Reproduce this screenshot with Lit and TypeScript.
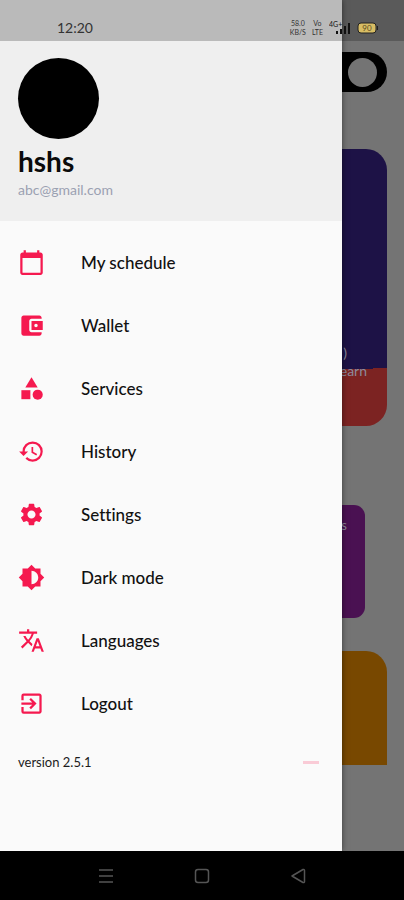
import { LitElement, html, css, svg } from "lit";
import { customElement } from "lit/decorators.js";

const icons = {
  calendar: svg`<path d="M20 3h-1V1h-2v2H7V1H5v2H4c-1.100 0-2 .9-2 2v16c0 1.100.9 2 2 2h16c1.100 0 2-.9 2-2V5c0-1.100-.9-2-2-2zm0 18H4V8h16v13z"/>`,
  wallet: svg`<path d="M21 18v1c0 1.100-.9 2-2 2H5c-1.110 0-2-.9-2-2V5c0-1.100.890-2 2-2h14c1.100 0 2 .9 2 2v1h-9c-1.110 0-2 .9-2 2v8c0 1.100.890 2 2 2h9zm-9-2h10V8H12v8zm4-2.500c-.830 0-1.500-.670-1.500-1.500s.670-1.500 1.500-1.500 1.500.670 1.500 1.500-.670 1.500-1.500 1.500z"/>`,
  services: svg`<path d="M12 2 6.500 11h11z"/><circle cx="17.500" cy="17.500" r="4.500"/><path d="M3 13.500h8v8H3z"/>`,
  history: svg`<path d="M13 3a9 9 0 0 0-9 9H1l3.890 3.890.070.140L9 12H6c0-3.870 3.130-7 7-7s7 3.130 7 7-3.130 7-7 7c-1.930 0-3.680-.790-4.940-2.060l-1.420 1.420A8.954 8.954 0 0 0 13 21a9 9 0 0 0 0-18zm-1 5v5l4.280 2.540.720-1.210-3.500-2.080V8H12z"/>`,
  settings: svg`<path d="M19.140 12.940c.040-.3.060-.610.060-.940 0-.320-.020-.640-.070-.940l2.030-1.580c.180-.140.230-.410.120-.610l-1.920-3.320c-.120-.220-.370-.290-.590-.220l-2.390.960c-.5-.380-1.030-.7-1.620-.940l-.360-2.540c-.040-.240-.240-.410-.480-.410h-3.840c-.240 0-.430.170-.470.410l-.360 2.540c-.590.240-1.130.570-1.620.940l-2.390-.960c-.220-.080-.470 0-.590.220L2.740 8.870c-.120.210-.080.470.120.610l2.030 1.580c-.050.3-.090.630-.090.940s.020.640.070.940l-2.030 1.580c-.180.140-.230.410-.120.610l1.920 3.320c.120.220.370.290.590.220l2.390-.960c.5.380 1.030.7 1.620.940l.360 2.540c.050.240.240.410.480.410h3.840c.240 0 .440-.170.470-.410l.360-2.540c.590-.240 1.130-.560 1.620-.940l2.390.960c.220.080.470 0 .590-.220l1.920-3.320c.120-.220.070-.470-.120-.610l-2.010-1.580zM12 15.600c-1.980 0-3.600-1.620-3.600-3.600s1.620-3.600 3.600-3.600 3.600 1.620 3.600 3.600-1.620 3.600-3.600 3.600z"/>`,
  dark: svg`<path d="M20 15.310 23.310 12 20 8.690V4h-4.690L12 .690 8.690 4H4v4.690L.690 12 4 15.310V20h4.690L12 23.310 15.310 20H20v-4.690zM12 18V6c3.310 0 6 2.690 6 6s-2.690 6-6 6z"/>`,
  translate: svg`<path d="m12.870 15.070-2.540-2.510.030-.030A17.520 17.520 0 0 0 14.070 6H17V4h-7V2H8v2H1v1.990h11.170C11.500 7.920 10.440 9.750 9 11.350 8.070 10.320 7.300 9.190 6.690 8h-2c.730 1.630 1.730 3.170 2.980 4.560l-5.090 5.020L4 19l5-5 3.110 3.110.760-2.040zM18.500 10h-2L12 22h2l1.120-3h4.750L21 22h2l-4.500-12zm-2.620 7 1.620-4.330L19.120 17h-3.240z"/>`,
  logout: svg`<path d="M10.090 15.590 11.500 17l5-5-5-5-1.410 1.410L12.670 11H3v2h9.670l-2.580 2.590zM19 3H5a2 2 0 0 0-2 2v4h2V5h14v14H5v-4H3v4a2 2 0 0 0 2 2h14c1.100 0 2-.9 2-2V5c0-1.100-.9-2-2-2z"/>`,
};

const items = [
  { label: "My schedule", icon: icons.calendar },
  { label: "Wallet", icon: icons.wallet },
  { label: "Services", icon: icons.services },
  { label: "History", icon: icons.history },
  { label: "Settings", icon: icons.settings },
  { label: "Dark mode", icon: icons.dark },
  { label: "Languages", icon: icons.translate },
  { label: "Logout", icon: icons.logout },
];

@customElement("status-bar")
class StatusBar extends LitElement {
  static styles = css`
    :host {
      display: flex;
      align-items: center;
      justify-content: space-between;
      box-sizing: border-box;
      height: 41px;
      padding: 14px 25px 0 57px;
      background: rgba(0, 0, 0, 0.22);
      color: #333;
    }
    .time { font-size: 14px; line-height: 16px; }
    .right { display: flex; align-items: center; gap: 6px; }
    .stack {
      display: flex;
      flex-direction: column;
      font-size: 7px;
      line-height: 9px;
      text-align: center;
    }
    .signal { width: 22px; height: 14px; fill: #111; }
    .tiny { font-size: 7px; }
    .battery { width: 22px; height: 12px; }
    .level { font-size: 8px; fill: #5b4a20; }
  `;
  render() {
    return html`
      <span class="time">12:20</span>
      <div class="right">
        <span class="stack"><span>58.0</span><span>KB/S</span></span>
        <span class="stack"><span>Vo</span><span>LTE</span></span>
        <svg class="signal" viewBox="0 0 22 14" aria-hidden="true">
          <text class="tiny" x="0" y="6">4G+</text>
          <path d="M7 10h2v3H7zM11 8h2v5h-2zM15 5h2v8h-2zM19 2h2v11h-2z" />
        </svg>
        <svg class="battery" viewBox="0 0 22 12" aria-hidden="true">
          <rect x="1" y="1" width="18" height="10" rx="3" fill="#d8bd64" stroke="#222" />
          <path d="M20 4h1v4h-1z" fill="#222" />
          <text class="level" x="10" y="9" text-anchor="middle">90</text>
        </svg>
      </div>
    `;
  }
}

@customElement("home-page")
class HomePage extends LitElement {
  static styles = css`
    :host {
      display: flex;
      flex-direction: column;
      align-items: stretch;
      padding: 52px 17px 0;
      background: #747474;
      color: #8d8a9c;
    }
    .toggle {
      appearance: none;
      display: flex;
      justify-content: flex-end;
      align-items: center;
      align-self: flex-end;
      box-sizing: border-box;
      width: 80px;
      height: 40px;
      margin: 0;
      padding: 0 10px;
      border-radius: 20px;
      background: #000;
    }
    .toggle::before {
      content: "";
      width: 29px;
      height: 29px;
      border-radius: 50%;
      background: #747474;
    }
    .hero {
      display: flex;
      flex-direction: column;
      align-items: flex-end;
      box-sizing: border-box;
      height: 277px;
      margin-top: 57px;
      padding: 195px 20px 0;
      border-radius: 21px;
      background: linear-gradient(178deg, #1d1246 80%, #7c2322 80%);
      font-size: 14px;
      line-height: 18px;
    }
    .mark { padding-right: 20px; }
    .tile {
      box-sizing: border-box;
      height: 113px;
      margin: 79px 22px 0 0;
      padding: 11px 18px;
      border-radius: 11px;
      background: #4a1152;
      font-size: 13px;
      line-height: 18px;
      text-align: right;
    }
    .offer {
      height: 114px;
      margin-top: 33px;
      border-radius: 21px 21px 0 0;
      background: #784800;
    }
  `;
  render() {
    return html`
      <input class="toggle" type="checkbox" role="switch" aria-label="Availability" checked />
      <section class="hero"><span class="mark">)</span><span>earn</span></section>
      <section class="tile">s</section>
      <section class="offer"></section>
    `;
  }
}

@customElement("side-drawer")
class SideDrawer extends LitElement {
  static styles = css`
    :host {
      display: block;
      background: #fafafa;
      box-shadow: 0 0 6px rgba(0, 0, 0, 0.5);
    }
    .profile {
      box-sizing: border-box;
      height: 221px;
      padding: 58px 18px 0;
      background: #efefef;
    }
    .avatar { width: 81px; height: 81px; border-radius: 50%; background: #000; }
    .name {
      margin: 5px 0 0;
      font-size: 28px;
      line-height: 34px;
      font-weight: 700;
      color: #0a0a0a;
    }
    .mail { margin: 3px 0 0; font-size: 14px; line-height: 18px; color: #9ba1b2; }
    .menu { margin: 0; padding: 10px 0 0; list-style: none; }
    .item {
      display: flex;
      align-items: center;
      gap: 36px;
      width: 100%;
      height: 63px;
      padding: 0 18px;
      border: 0;
      background: none;
      font: inherit;
      font-size: 17px;
      line-height: 24px;
      font-weight: 500;
      font-variant-ligatures: none;
      color: #111;
      text-align: left;
      cursor: pointer;
    }
    .icon { width: 27px; height: 27px; fill: #f5194f; }
    .foot {
      display: flex;
      align-items: center;
      justify-content: space-between;
      padding: 17px 23px 0 18px;
      font-size: 13px;
      line-height: 20px;
      color: #1c1c1c;
    }
    .dash { width: 16px; height: 3px; background: #f9cbd6; }
  `;
  render() {
    return html`
      <header class="profile">
        <div class="avatar"></div>
        <h1 class="name">hshs</h1>
        <p class="mail">abc@gmail.com</p>
      </header>
      <ul class="menu">
        ${items.map(
          (item) => html`<li>
            <button class="item" type="button">
              <svg class="icon" viewBox="0 0 24 24" aria-hidden="true">${item.icon}</svg>
              <span>${item.label}</span>
            </button>
          </li>`
        )}
      </ul>
      <div class="foot"><span>version 2.5.1</span><span class="dash"></span></div>
    `;
  }
}

@customElement("app-root")
class AppRoot extends LitElement {
  static styles = css`
    :host {
      display: flex;
      flex-direction: column;
      min-height: 100vh;
      font-family: Lato, "Open Sans", sans-serif;
    }
    .stage {
      position: relative;
      display: grid;
      flex: 1;
      grid-template-columns: 1fr 62px;
      overflow: hidden;
    }
    .page { grid-area: 1 / 1 / 2 / 3; }
    .drawer { grid-area: 1 / 1 / 2 / 2; z-index: 1; }
    .status { position: absolute; top: 0; left: 0; right: 0; z-index: 2; }
    .nav {
      display: flex;
      align-items: center;
      justify-content: center;
      gap: 80px;
      height: 49px;
      background: #000;
    }
    .key { display: flex; padding: 0; border: 0; background: none; cursor: pointer; }
    .glyph { width: 16px; height: 16px; fill: none; stroke: #555; stroke-width: 1.5; }
  `;
  render() {
    return html`
      <div class="stage">
        <home-page class="page"></home-page>
        <side-drawer class="drawer"></side-drawer>
        <status-bar class="status"></status-bar>
      </div>
      <nav class="nav">
        <button class="key" type="button" aria-label="Recent apps">
          <svg class="glyph" viewBox="0 0 16 16"><path d="M1 2h14M1 8h14M1 14h14" /></svg>
        </button>
        <button class="key" type="button" aria-label="Home">
          <svg class="glyph" viewBox="0 0 16 16"><rect x="1.500" y="1.500" width="13" height="13" rx="2.500" /></svg>
        </button>
        <button class="key" type="button" aria-label="Back">
          <svg class="glyph" viewBox="0 0 16 16"><path d="M2 8 13 1.500q1.500-.5 1.500 1v11q0 1.500-1.500 1z" stroke-linejoin="round" /></svg>
        </button>
      </nav>
    `;
  }
}
